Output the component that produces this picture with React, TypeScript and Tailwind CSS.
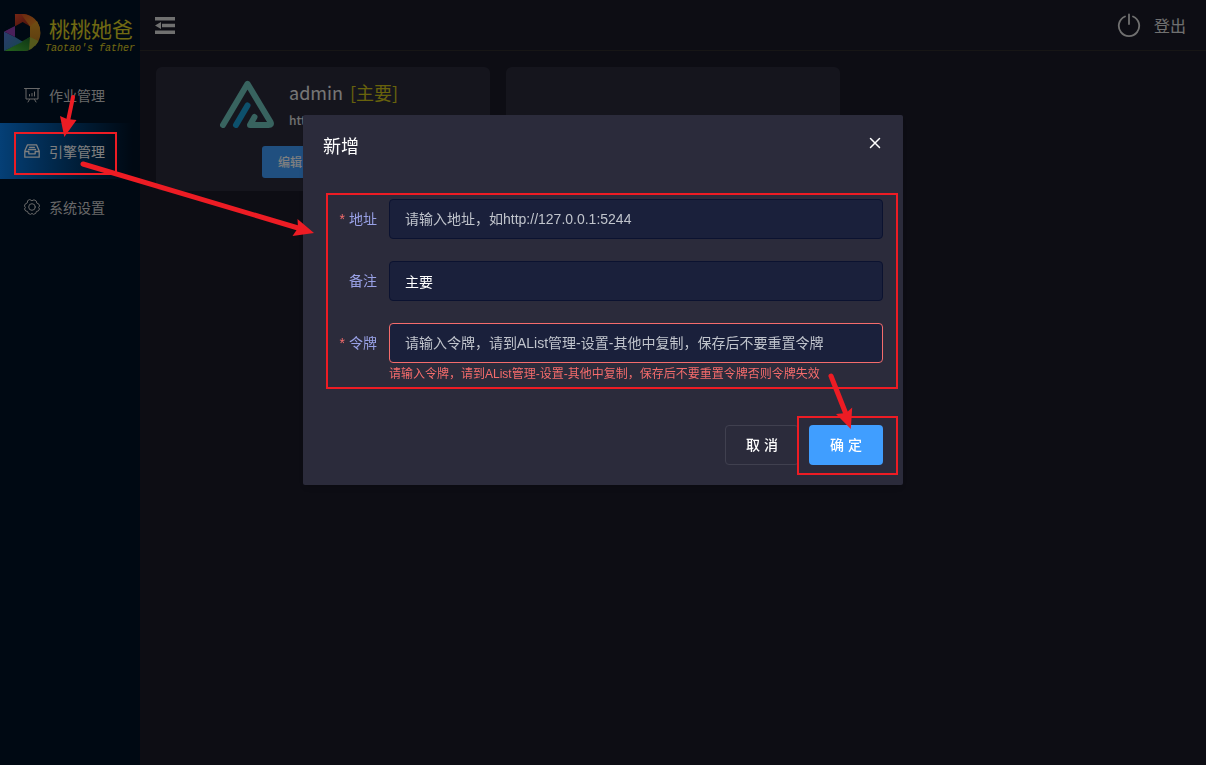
import { useState } from 'react';

const stroke = { fill: 'none', stroke: 'currentColor', strokeLinecap: 'round', strokeLinejoin: 'round' } as const;

function BrandMark() {
  return (
    <svg viewBox="0 0 37 38" className="h-[38px] w-[37px] shrink-0" aria-hidden="true">
      <defs>
        <linearGradient id="mark-red" x1="0" y1="0" x2="1" y2="1">
          <stop offset="0" stopColor="#f0502c" />
          <stop offset="1" stopColor="#8a2018" />
        </linearGradient>
        <linearGradient id="mark-orange" x1="0" y1="0" x2="1" y2="1">
          <stop offset="0" stopColor="#d85020" />
          <stop offset="1" stopColor="#e8a024" />
        </linearGradient>
        <linearGradient id="mark-yellow" x1="0" y1="0" x2="0" y2="1">
          <stop offset="0" stopColor="#e09a24" />
          <stop offset="1" stopColor="#b87a20" />
        </linearGradient>
        <linearGradient id="mark-green" x1="0" y1="1" x2="1" y2="0">
          <stop offset="0" stopColor="#4cc83c" />
          <stop offset="1" stopColor="#1c6a28" />
        </linearGradient>
        <linearGradient id="mark-blue" x1="0" y1="0" x2="1" y2="1">
          <stop offset="0" stopColor="#5878d8" />
          <stop offset="1" stopColor="#2a8aa0" />
        </linearGradient>
      </defs>
      <path d="M11 0 H19 Q23 0 26 2 L27 13 18.700 8 8 14Z" fill="url(#mark-red)" />
      <path d="M17 0 H20 Q33 2 36 15 L26 12.500Z" fill="url(#mark-orange)" />
      <path d="M26 12.500 L33 7 Q36.500 13 36.500 19 Q36 27 31 32 L26 23Z" fill="url(#mark-yellow)" />
      <path d="M26 23 L34.500 27 Q29 37 19 37 H14 L18.700 28Z" fill="#a8b038" />
      <path d="M0 37 L26 23 L25 36 Q22 37 18 37Z" fill="url(#mark-green)" />
      <path d="M0 17.500 L11 23 18.700 27.700 0 37Z" fill="url(#mark-blue)" />
      <path d="M0 17.500 L11 11 V23Z" fill="#9440b4" />
      <path d="M11 0 L0 17.500 11 12Z" fill="#001226" />
    </svg>
  );
}

function BoardIcon() {
  return (
    <svg viewBox="0 0 16 16" className="size-4 shrink-0" strokeWidth="1" aria-hidden="true" {...stroke}>
      <path d="M.5 1.500h15M2 1.500v10.500h12V1.500M5.500 12.500l-1.500 2.500M10.500 12.500l1.500 2.500M5.500 9V7.500M8 9V6.500M10.500 9V5" />
    </svg>
  );
}

function TrayIcon() {
  return (
    <svg viewBox="0 0 16 16" className="size-4 shrink-0" strokeWidth="1.300" aria-hidden="true" {...stroke}>
      <path d="M.8 8 3.500 1.800h9L15.200 8v6.200H.8V8.500h4v2.300h6.400V8.500h4M5.500 4.300h5M4.500 6.500h7" />
    </svg>
  );
}

function GearIcon() {
  return (
    <svg viewBox="0 0 16 16" className="size-4 shrink-0" strokeWidth="1" aria-hidden="true" {...stroke}>
      <path d="M6 .8Q8 2.800 10 .8L12.300 2Q12 4.700 14.700 4.900L15.600 7Q13.600 8.300 15.500 10L14.300 12Q11.700 11.700 11.800 14.300L9.500 15.400Q8 13.400 6.500 15.400L4.200 14.300Q4.300 11.700 1.700 12L.5 10Q2.400 8.300.4 7L1.300 4.900Q4 4.700 3.700 2Z" />
      <circle cx="8" cy="8" r="3.300" />
    </svg>
  );
}

function FoldIcon() {
  return (
    <svg viewBox="0 0 20 17" className="h-[17px] w-5" fill="currentColor" aria-hidden="true">
      <path d="M0 0h20v3.500H0zM7 6.700h13v3.500H7zM0 13.500h20V17H0zM0 8.500 6 5v7z" />
    </svg>
  );
}

function PowerIcon() {
  return (
    <svg viewBox="0 0 24 24" className="size-6" strokeWidth="1.800" aria-hidden="true" {...stroke}>
      <path d="M12 1.500v9.500M8 3.500a10.200 10.200 0 1 0 8 0" />
    </svg>
  );
}

function EngineLogo() {
  return (
    <svg viewBox="0 0 54 48" className="h-12 w-[54px] shrink-0" fill="none" strokeWidth="6" strokeLinecap="round" strokeLinejoin="round" aria-hidden="true">
      <path stroke="#70c6be" d="M3 45 27.500 3.800 50.500 42Q52 45 48.500 45H30L34.500 37" />
      <path stroke="#1ba0d8" d="M16 45 27.500 25.500" />
    </svg>
  );
}

const navItems = [
  { label: '作业管理', Icon: BoardIcon, active: false },
  { label: '引擎管理', Icon: TrayIcon, active: true },
  { label: '系统设置', Icon: GearIcon, active: false },
];

function Sidebar() {
  return (
    <aside className="w-[140px] shrink-0 bg-[#001226]">
      <div className="flex h-[67px] items-start pt-[14px] pl-1">
        <BrandMark />
        <div className="pl-2 whitespace-nowrap text-[#e0d424]">
          <div className="text-[21px] leading-7">桃桃她爸</div>
          <div className="-ml-1 font-['Liberation_Mono',monospace] text-[10px] leading-[14px] italic">Taotao's father</div>
        </div>
      </div>
      <nav>
        {navItems.map(({ label, Icon, active }) => (
          <a
            key={label}
            href="#"
            className={
              active
                ? 'flex h-14 items-center gap-[9px] bg-linear-to-r from-[#0a80ee] to-[#001226] to-95% pl-6 text-sm text-white'
                : 'flex h-14 items-center gap-[9px] pl-6 text-sm text-[#d0d0d0]'
            }
          >
            <Icon />
            {label}
          </a>
        ))}
      </nav>
    </aside>
  );
}

function EngineCard() {
  return (
    <article className="flex h-[124px] flex-col items-center rounded-md bg-[#2b2b3b] pt-[13px]">
      <div className="flex gap-[15px]">
        <EngineLogo />
        <div className="w-[137px] whitespace-nowrap">
          <h2 className="flex gap-[7px] text-lg leading-6 text-[#ededed]">
            admin <span className="text-[#d0c418]">[主要]</span>
          </h2>
          <p className="mt-1 text-xs leading-6 font-medium text-[#e0e0e0]">http://127.0.0.1:5244</p>
        </div>
      </div>
      <div className="mt-[14px] flex w-[122px] text-xs font-medium text-white">
        <button type="button" className="h-8 w-14 rounded-[3px] bg-[#409eff]">编辑</button>
      </div>
    </article>
  );
}

type FieldProps = {
  id: string;
  label: string;
  value: string;
  onChange: (value: string) => void;
  placeholder?: string;
  required?: boolean;
  error?: string;
};

function Field({ id, label, value, onChange, placeholder, required, error }: FieldProps) {
  return (
    <div className="flex h-[62px] items-start">
      <label htmlFor={id} className="w-[66px] shrink-0 pr-3 text-right text-sm leading-10 text-[#99a1e6]">
        {required && <span className="mr-1 text-[#f56c6c]">*</span>}
        {label}
      </label>
      <div className="min-w-0 flex-1">
        <input
          id={id}
          type="text"
          value={value}
          placeholder={placeholder}
          onChange={(e) => onChange(e.target.value)}
          className={
            error
              ? 'block h-10 w-full rounded-sm border border-[#f56c6c] bg-[#1a203b] px-[15px] text-sm text-white outline-none placeholder:text-[#c0c4cc]'
              : 'block h-10 w-full rounded-sm border border-[#0b1230] bg-[#1a203b] px-[15px] text-sm text-white outline-none placeholder:text-[#c0c4cc]'
          }
        />
        {error && <p className="pt-1 text-xs leading-[14px] whitespace-nowrap text-[#f56c6c]">{error}</p>}
      </div>
    </div>
  );
}

function AddEngineDialog() {
  const [url, setUrl] = useState('');
  const [remark, setRemark] = useState('主要');
  const [token, setToken] = useState('');
  return (
    <div className="fixed inset-0 flex items-start justify-center bg-black/50 pt-[15vh]">
      <div role="dialog" aria-labelledby="dialog-title" className="w-[600px] max-w-full rounded-xs bg-[#2b2b3b] font-['Liberation_Sans','Noto_Sans_CJK_SC',sans-serif] shadow-md">
        <header className="flex justify-between px-5 pt-5 pb-[10px] text-white">
          <h1 id="dialog-title" className="text-lg leading-6">新增</h1>
          <button type="button" aria-label="Close" className="flex size-4 items-center justify-center">
            <svg viewBox="0 0 16 16" className="size-4" strokeWidth="1.500" aria-hidden="true" {...stroke}>
              <path d="m3.500 3.500 9 9m0-9-9 9" />
            </svg>
          </button>
        </header>
        <form className="px-5 py-[30px]">
          <Field id="url" label="地址" value={url} onChange={setUrl} placeholder="请输入地址，如http://127.0.0.1:5244" required />
          <Field id="remark" label="备注" value={remark} onChange={setRemark} />
          <Field
            id="token"
            label="令牌"
            value={token}
            onChange={setToken}
            placeholder="请输入令牌，请到AList管理-设置-其他中复制，保存后不要重置令牌"
            error="请输入令牌，请到AList管理-设置-其他中复制，保存后不要重置令牌否则令牌失效"
            required
          />
        </form>
        <footer className="flex justify-end gap-[10px] px-5 pt-[10px] pb-5 text-sm font-medium text-white">
          <button type="button" className="h-10 w-[74px] rounded-sm border border-[#40404f]">取 消</button>
          <button type="button" className="h-10 w-[74px] rounded-sm bg-[#409eff]">确 定</button>
        </footer>
      </div>
    </div>
  );
}

function GuideArrows() {
  return (
    <svg viewBox="0 0 1206 765" width="1206" height="765" className="pointer-events-none absolute top-0 left-0" aria-hidden="true">
      <g fill="none" stroke="#ed1c24" strokeWidth="2">
        <rect x="15" y="133" width="101" height="41" />
        <rect x="327" y="194" width="570" height="194" />
        <rect x="798" y="417" width="99" height="57" />
      </g>
      <g stroke="#ed1c24" strokeLinecap="round">
        <path strokeWidth="4" d="M73 97 68 121" />
        <path strokeWidth="5" d="M83 164 298 228" />
        <path strokeWidth="5" d="M831 376 846 414" />
      </g>
      <g fill="#ed1c24">
        <path d="M64.300 137 60 116 67 119 76.500 120Z" />
        <path d="M314 233 292.500 236 298 228 297.500 219Z" />
        <path d="M850.800 429 836 414 846 413 852.200 407.500Z" />
      </g>
    </svg>
  );
}

export default function App() {
  return (
    <div className="relative flex min-h-screen bg-[#1a1a28] font-['Noto_Sans_CJK_SC',sans-serif]">
      <Sidebar />
      <div className="min-w-0 flex-1">
        <header className="flex h-[51px] items-center justify-between border-b border-[#2e2c2c] pr-5 pl-[15px] text-[#e0e0e0]">
          <button type="button" aria-label="Toggle menu">
            <FoldIcon />
          </button>
          <button type="button" className="flex items-center gap-[13px] text-base">
            <PowerIcon />
            登出
          </button>
        </header>
        <main className="grid grid-cols-3 gap-4 p-4">
          <EngineCard />
          <div className="h-[124px] rounded-md bg-[#2b2b3b]" />
        </main>
      </div>
      <AddEngineDialog />
      <GuideArrows />
    </div>
  );
}
